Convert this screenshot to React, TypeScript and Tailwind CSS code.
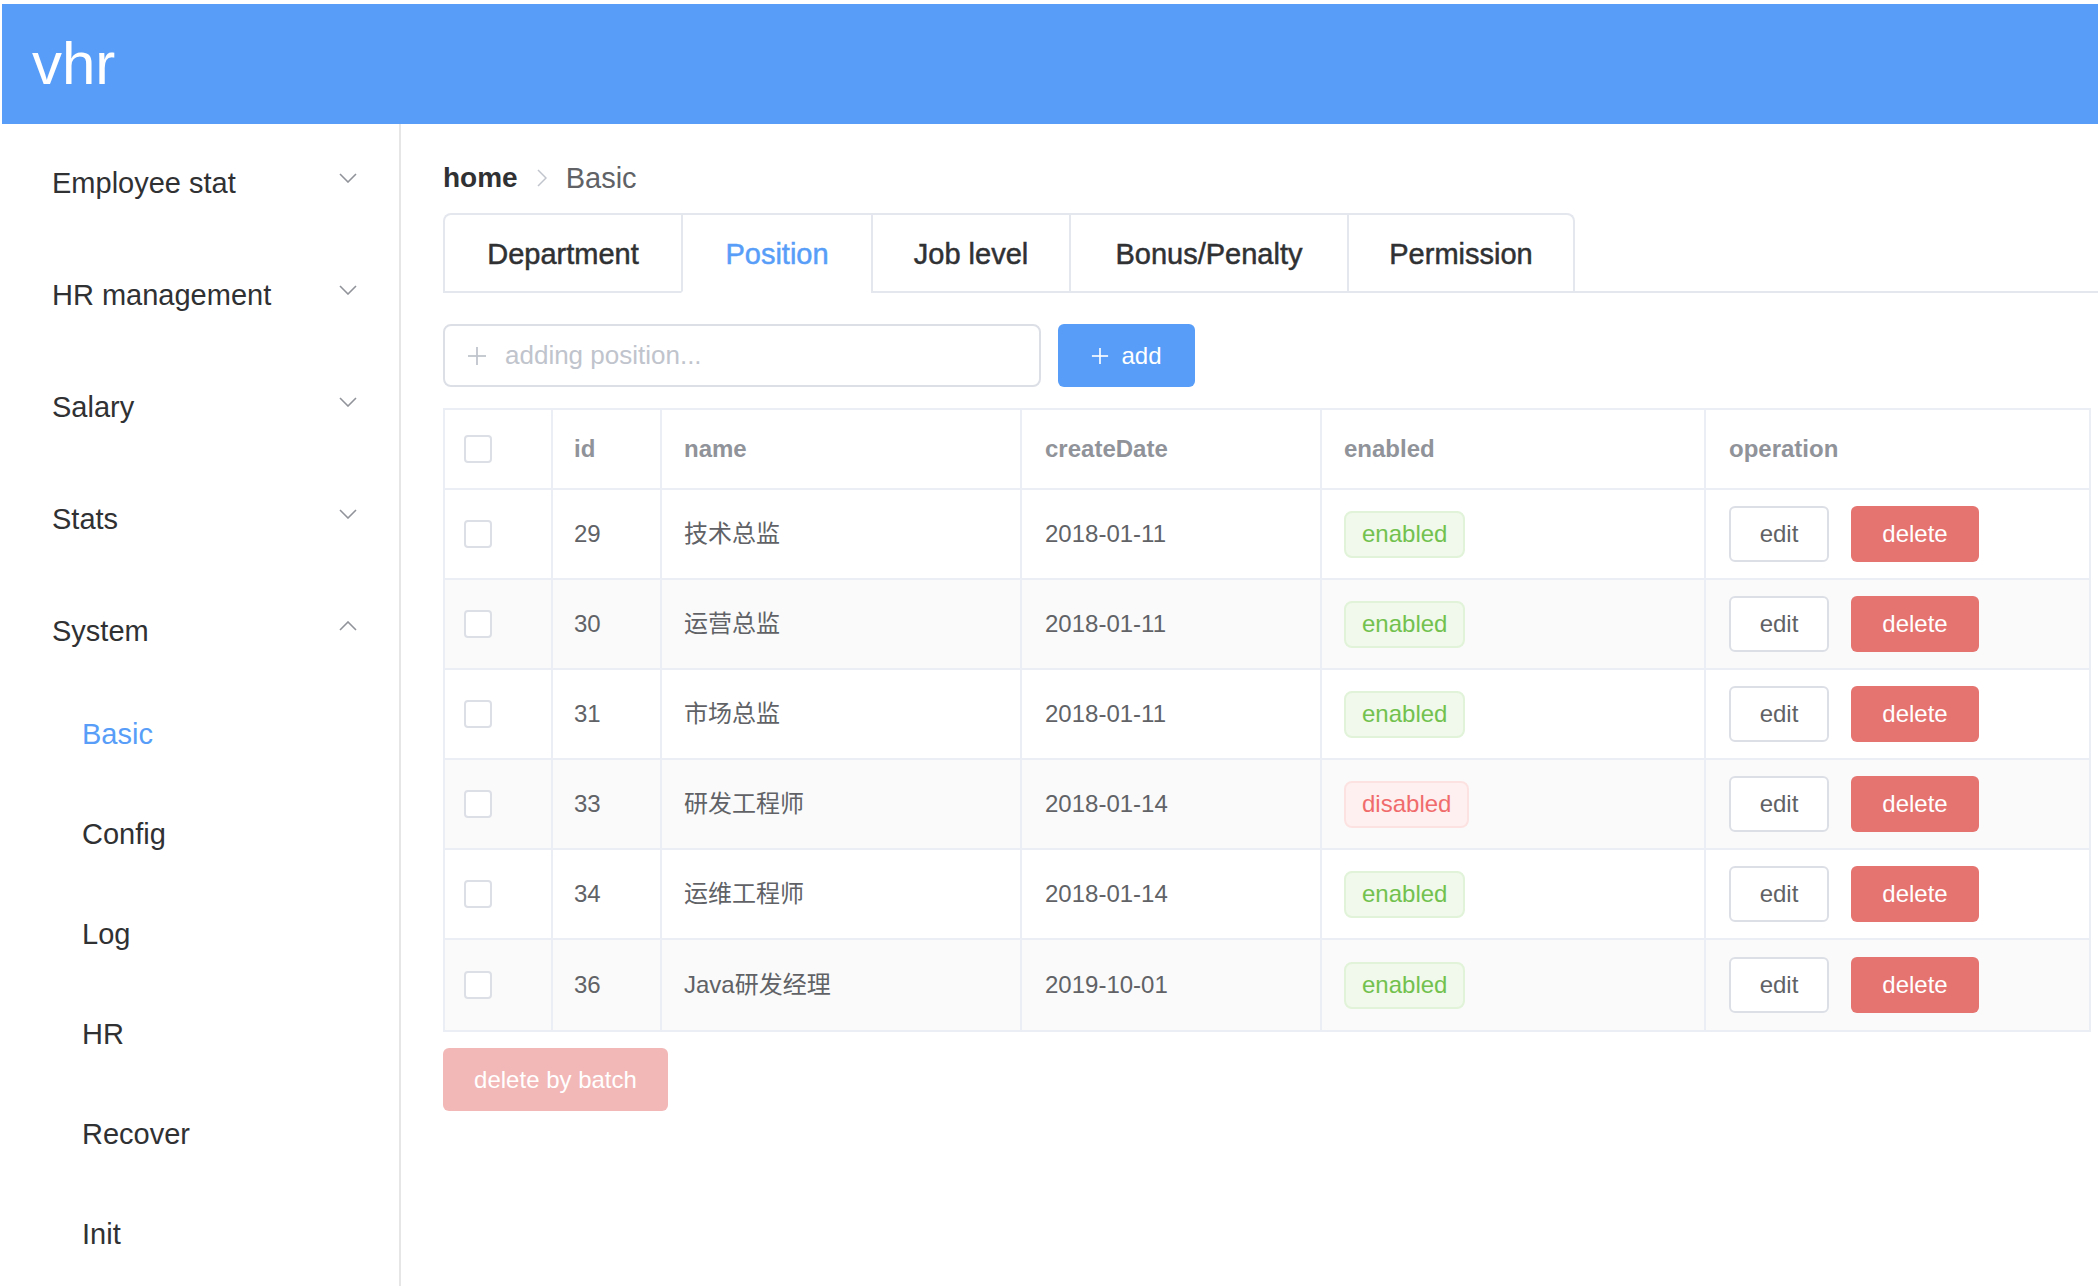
import React from "react";

const FONT = "font-['Liberation_Sans','Noto_Sans_CJK_SC',sans-serif]";

function ChevronDown({ up = false }: { up?: boolean }) {
  return (
    <svg width="18" height="10" viewBox="0 0 18 10" className={up ? "rotate-180" : ""}>
      <polyline points="1,1 9,9 17,1" fill="none" stroke="#909399" strokeWidth="1.6" />
    </svg>
  );
}

function Plus({ color, size = 20 }: { color: string; size?: number }) {
  return (
    <svg width={size} height={size} viewBox="0 0 20 20">
      <line x1="10" y1="1" x2="10" y2="19" stroke={color} strokeWidth="1.8" />
      <line x1="1" y1="10" x2="19" y2="10" stroke={color} strokeWidth="1.8" />
    </svg>
  );
}

function Checkbox() {
  return <div className="w-[28px] h-[28px] border-2 border-[#dcdfe6] rounded-[4px] bg-white" />;
}

const menus = ["Employee stat", "HR management", "Salary", "Stats"];
const subs = ["Basic", "Config", "Log", "HR", "Recover", "Init"];
const tabs = [
  { label: "Department", w: "w-[236px]" },
  { label: "Position", w: "w-[190px]" },
  { label: "Job level", w: "w-[198px]" },
  { label: "Bonus/Penalty", w: "w-[278px]" },
  { label: "Permission", w: "w-[226px]" },
];
const rows = [
  { id: 29, name: "技术总监", date: "2018-01-11", enabled: true },
  { id: 30, name: "运营总监", date: "2018-01-11", enabled: true },
  { id: 31, name: "市场总监", date: "2018-01-11", enabled: true },
  { id: 33, name: "研发工程师", date: "2018-01-14", enabled: false },
  { id: 34, name: "运维工程师", date: "2018-01-14", enabled: true },
  { id: 36, name: "Java研发经理", date: "2019-10-01", enabled: true },
];

export default function App() {
  return (
    <div className={`w-[2098px] h-[1286px] bg-white pt-[4px] pl-[2px] overflow-hidden ${FONT}`}>
      <div className="h-[120px] bg-[#589ef8] flex items-center pl-[30px]">
        <span className="text-[60px] leading-[60px] text-white">vhr</span>
      </div>
      <div className="flex h-[1162px]">
        <div className="w-[399px] shrink-0 border-r-2 border-[#e6e6e6] h-full">
          {menus.map((m) => (
            <div key={m} className="h-[112px] flex items-center justify-between pl-[50px] pr-[42px]">
              <span className="text-[29px] text-[#303133] mt-[8px]">{m}</span>
              <span className="mb-[4px] flex">
                <ChevronDown />
              </span>
            </div>
          ))}
          <div className="h-[112px] flex items-center justify-between pl-[50px] pr-[42px]">
            <span className="text-[29px] text-[#303133] mt-[8px]">System</span>
            <span className="mb-[4px] flex">
              <ChevronDown up />
            </span>
          </div>
          {subs.map((s) => (
            <div key={s} className="h-[100px] flex items-center pl-[80px] pt-[2px]">
              <span className={`text-[29px] ${s === "Basic" ? "text-[#589ef8]" : "text-[#303133]"}`}>{s}</span>
            </div>
          ))}
        </div>
        <div className="flex-1 pl-[42px] pt-[40px] min-w-0">
          <div className="h-[28px] flex items-center text-[28px] leading-none">
            <span className="font-bold text-[#303133]">home</span>
            <span className="mx-[19px] flex items-center">
              <svg width="10" height="18" viewBox="0 0 10 18">
                <polyline points="1,1 9,9 1,17" fill="none" stroke="#c0c4cc" strokeWidth="1.5" />
              </svg>
            </span>
            <span className="text-[#606266] text-[29px]">Basic</span>
          </div>

          <div className="mt-[21px] flex h-[80px]">
            <div className="flex border-t-2 border-x-2 border-[#e4e7ed] rounded-t-[8px]">
              {tabs.map((t, i) => (
                <div
                  key={t.label}
                  className={`${t.w} h-[78px] pt-[4px] flex items-center justify-center text-[29px] [-webkit-text-stroke:0.5px_currentColor] border-b-2 ${
                    i > 0 ? "border-l-2 border-l-[#e4e7ed]" : ""
                  } ${i === 1 ? "border-b-white text-[#589ef8]" : "border-b-[#e4e7ed] text-[#303133]"}`}
                >
                  {t.label}
                </div>
              ))}
            </div>
            <div className="flex-1 border-b-2 border-[#e4e7ed]" />
          </div>

          <div className="mt-[31px] flex items-center">
            <div className="w-[598px] h-[63px] border-2 border-[#dcdfe6] rounded-[8px] flex items-center pl-[22px]">
              <Plus color="#c0c4cc" />
              <span className="ml-[18px] text-[26px] text-[#c0c4cc]">adding position...</span>
            </div>
            <div className="ml-[17px] w-[137px] h-[63px] rounded-[6px] bg-[#589ef8] flex items-center justify-center text-white text-[24px]">
              <Plus color="#ffffff" size={18} />
              <span className="ml-[12px]">add</span>
            </div>
          </div>

          <div className="mt-[21px] w-[1648px] border-2 border-[#ebeef5] text-[24px]">
            <div className="flex h-[80px] border-b-2 border-[#ebeef5] font-bold text-[#909399]">
              <div className="w-[108px] border-r-2 border-[#ebeef5] flex items-center pl-[19px]"><Checkbox /></div>
              <div className="w-[109px] border-r-2 border-[#ebeef5] flex items-center pl-[21px]">id</div>
              <div className="w-[360px] border-r-2 border-[#ebeef5] flex items-center pl-[22px]">name</div>
              <div className="w-[300px] border-r-2 border-[#ebeef5] flex items-center pl-[23px]">createDate</div>
              <div className="w-[384px] border-r-2 border-[#ebeef5] flex items-center pl-[22px]">enabled</div>
              <div className="flex-1 flex items-center pl-[23px]">operation</div>
            </div>
            {rows.map((r, i) => (
              <div
                key={r.id}
                className={`flex h-[90px] ${i < rows.length - 1 ? "border-b-2 border-[#ebeef5]" : ""} ${
                  i % 2 === 1 ? "bg-[#fafafa]" : "bg-white"
                } text-[#606266]`}
              >
                <div className="w-[108px] border-r-2 border-[#ebeef5] flex items-center pl-[19px]"><Checkbox /></div>
                <div className="w-[109px] border-r-2 border-[#ebeef5] flex items-center pl-[21px]">{r.id}</div>
                <div className="w-[360px] border-r-2 border-[#ebeef5] flex items-center pl-[22px]">{r.name}</div>
                <div className="w-[300px] border-r-2 border-[#ebeef5] flex items-center pl-[23px]">{r.date}</div>
                <div className="w-[384px] border-r-2 border-[#ebeef5] flex items-center pl-[22px]">
                  {r.enabled ? (
                    <span className="h-[47px] px-[16px] flex items-center rounded-[8px] border-2 border-[#e1f3d8] bg-[#f0f9eb] text-[#72c14e]">
                      enabled
                    </span>
                  ) : (
                    <span className="h-[47px] px-[16px] flex items-center rounded-[8px] border-2 border-[#fde2e2] bg-[#fef0f0] text-[#f06c6c]">
                      disabled
                    </span>
                  )}
                </div>
                <div className="flex-1 flex items-center pl-[23px]">
                  <div className="w-[100px] h-[56px] border-2 border-[#dcdfe6] rounded-[6px] bg-white flex items-center justify-center text-[#606266]">
                    edit
                  </div>
                  <div className="ml-[22px] w-[128px] h-[56px] rounded-[6px] bg-[#e5736f] flex items-center justify-center text-white">
                    delete
                  </div>
                </div>
              </div>
            ))}
          </div>

          <div className="mt-[16px] w-[225px] h-[63px] rounded-[6px] bg-[#f2b8b7] flex items-center justify-center text-white text-[24px]">
            delete by batch
          </div>
        </div>
      </div>
    </div>
  );
}
